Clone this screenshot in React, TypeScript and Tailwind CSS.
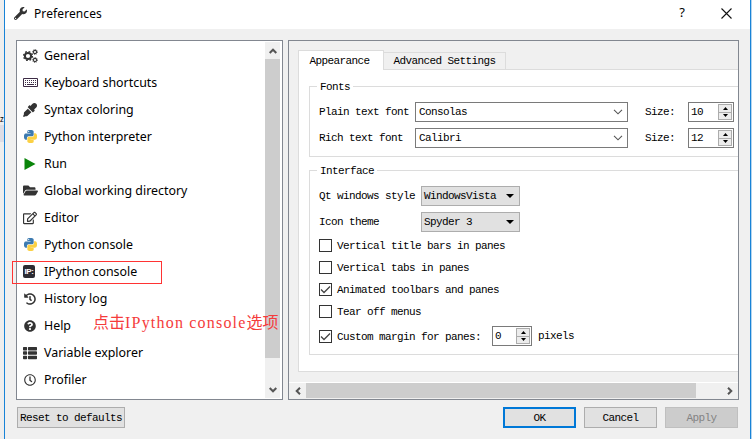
import type { ReactNode } from "react";
import {
  FaWrench, FaEyeDropper, FaFolderOpen, FaRegEdit,
  FaHistory, FaQuestionCircle, FaThList, FaRegClock,
} from "react-icons/fa";

const mono = "font-['Liberation_Mono','Noto_Sans_CJK_SC',monospace] text-[11px] tracking-[-0.6px] whitespace-pre";

function PythonIcon() {
  return (
    <svg viewBox="0 0 24 24" className="size-[13px]">
      <path fill="#3c7ab0" fillRule="evenodd" d="M14.25.18l.9.2.73.26.59.3.45.32.34.34.25.34.16.33.1.3.04.26.02.2-.01.13V8.5l-.05.63-.13.55-.21.46-.26.38-.3.31-.33.25-.35.19-.35.14-.33.1-.3.07-.26.04-.21.02H8.77l-.69.05-.59.14-.5.22-.41.27-.33.32-.27.35-.2.36-.15.37-.1.35-.07.32-.04.27-.02.21v3.06H3.17l-.21-.03-.28-.07-.32-.12-.35-.18-.36-.26-.36-.36-.35-.46-.32-.59-.28-.73-.21-.88-.14-1.05-.05-1.23.06-1.22.16-1.04.24-.87.32-.71.36-.57.4-.44.42-.33.42-.24.4-.16.36-.1.32-.05.24-.01h.16l.06.01h8.16v-.83H6.18l-.01-2.75-.02-.37.05-.34.11-.31.17-.28.25-.26.31-.23.38-.2.44-.18.51-.15.58-.12.64-.1.71-.06.77-.04.84-.02 1.27.05zm-6.3 1.98l-.23.33-.08.41.08.41.23.34.33.22.41.09.41-.09.33-.22.23-.34.08-.41-.08-.41-.23-.33-.33-.22-.41-.09-.41.09z" />
      <path fill="#fbd043" d="M21.04 6.11l.28.06.32.12.35.18.36.27.36.35.35.47.32.59.28.73.21.88.14 1.04.05 1.23-.06 1.23-.16 1.04-.24.86-.32.71-.36.57-.4.45-.42.33-.42.24-.4.16-.36.09-.32.05-.24.02-.16-.01h-8.22v.82h5.84l.01 2.76.02.36-.05.34-.11.31-.17.29-.25.25-.31.24-.38.2-.44.17-.51.15-.58.13-.64.09-.71.07-.77.04-.84.01-1.27-.04-1.07-.14-.9-.2-.73-.25-.59-.3-.45-.33-.34-.34-.25-.34-.16-.33-.1-.3-.04-.25-.02-.2.01-.13v-5.34l.05-.64.13-.54.21-.46.26-.38.3-.32.33-.24.35-.2.35-.14.33-.1.3-.06.26-.04.21-.02.13-.01h5.84l.69-.05.59-.14.5-.21.41-.28.33-.32.27-.35.2-.36.15-.36.1-.35.07-.32.04-.28.02-.21V6.07h2.09z" />
    </svg>
  );
}

function GearsIcon() {
  return (
    <svg viewBox="0 0 15 14" className="h-[14px] w-[15px]" fill="none" stroke="#333">
      <circle cx="5" cy="7" r="3.1" strokeWidth="2" />
      <circle cx="5" cy="7" r="4.5" strokeWidth="1.2" strokeDasharray="1.77 1.77" />
      <circle cx="12" cy="3" r="1.6" strokeWidth="1.1" />
      <circle cx="12" cy="3" r="2.5" strokeWidth=".8" strokeDasharray="1 .96" />
      <circle cx="12" cy="11" r="1.6" strokeWidth="1.1" />
      <circle cx="12" cy="11" r="2.5" strokeWidth=".8" strokeDasharray="1 .96" />
    </svg>
  );
}

function KeyboardIcon() {
  return (
    <svg viewBox="0 0 15 9" className="h-[9px] w-[15px]" fill="none" stroke="#3d2b45">
      <path d="M.5.5h14v8H.5z" />
      <path d="M2 2.5h11M2 4.5h11" strokeDasharray="1 1" />
      <path d="M2 6.5h1M4 6.5h7M12 6.5h1" />
    </svg>
  );
}

const items: { label: string; icon: ReactNode }[] = [
  { label: "General", icon: <GearsIcon /> },
  { label: "Keyboard shortcuts", icon: <KeyboardIcon /> },
  { label: "Syntax coloring", icon: <FaEyeDropper className="size-[14px]" /> },
  { label: "Python interpreter", icon: <PythonIcon /> },
  { label: "Run", icon: <svg viewBox="0 0 12 12" className="size-[12px]"><path fill="#0a850a" d="M.5 0L11.5 6 .5 12z" /></svg> },
  { label: "Global working directory", icon: <FaFolderOpen className="size-[15px]" /> },
  { label: "Editor", icon: <FaRegEdit className="size-[14px]" /> },
  { label: "Python console", icon: <PythonIcon /> },
  {
    label: "IPython console",
    icon: (
      <span className="mr-[2px] flex h-[13px] w-[12px] items-center justify-center rounded-[2px] bg-[#2c2c33] font-['Liberation_Sans',sans-serif] text-[8px] leading-none font-bold tracking-[-0.4px] text-white">IP:</span>
    ),
  },
  { label: "History log", icon: <FaHistory className="size-[12px]" /> },
  { label: "Help", icon: <FaQuestionCircle className="size-[12px]" /> },
  { label: "Variable explorer", icon: <FaThList className="size-[14px]" /> },
  { label: "Profiler", icon: <FaRegClock className="size-[12px]" /> },
];

const turns = { up: "rotate-180", down: "", left: "rotate-90", right: "-rotate-90" };

function ScrollArrow({ dir }: { dir: keyof typeof turns }) {
  return (
    <svg viewBox="0 0 8 6" className={`h-[6px] w-[8px] ${turns[dir]}`}>
      <path d="M.7 1L4 4.3 7.3 1" fill="none" stroke="#555" strokeWidth="2" />
    </svg>
  );
}

function Combo({ value }: { value: string }) {
  return (
    <div className="flex h-[20px] w-[213px] items-center justify-between border border-[#7a7a7a] bg-white pr-[4px] pl-[3px]">
      <span>{value}</span>
      <svg viewBox="0 0 10 6" className="h-[6px] w-[10px]"><path d="M1 .8l4 4 4-4" fill="none" stroke="#555" strokeWidth="1.1" /></svg>
    </div>
  );
}

function Spin({ value, width }: { value: string; width: string }) {
  return (
    <div className={`flex h-[20px] items-center justify-between border border-[#7a7a7a] bg-white pr-[1px] pl-[2px] ${width}`}>
      <span>{value}</span>
      <span className="flex h-[16px] w-[14px] flex-col">
        <span className="flex flex-1 items-center justify-center border border-[#acacac] bg-[#ececec]">
          <svg viewBox="0 0 5 3" className="h-[3px] w-[5px]"><path d="M0 3L2.5 0 5 3z" /></svg>
        </span>
        <span className="flex flex-1 items-center justify-center border border-t-0 border-[#acacac] bg-[#ececec]">
          <svg viewBox="0 0 5 3" className="h-[3px] w-[5px]"><path d="M0 0h5L2.5 3z" /></svg>
        </span>
      </span>
    </div>
  );
}

function DropButton({ value }: { value: string }) {
  return (
    <div className="flex h-[20px] w-[99px] items-center justify-between border border-[#adadad] bg-[#e1e1e1] pr-[5px] pl-[2px]">
      <span>{value}</span>
      <svg viewBox="0 0 8 4" className="h-[4px] w-[8px]"><path d="M0 0h8L4 4z" /></svg>
    </div>
  );
}

function Check({ label, checked }: { label: string; checked?: boolean }) {
  return (
    <div className="flex h-[13px] items-center gap-[5px]">
      <span className="flex size-[13px] items-center justify-center border border-[#333] bg-white">
        {checked && <svg viewBox="0 0 11 11" className="size-[11px]"><path d="M1 5.5l3 3L10 2.5" fill="none" stroke="#444" strokeWidth="1.3" /></svg>}
      </span>
      <span className="mt-[2px]">{label}</span>
    </div>
  );
}

function GroupTitle({ children }: { children: string }) {
  return (
    <div className="-mt-[1px] flex h-[1px] items-center">
      <span className="ml-[7px] bg-white px-[3px] leading-[14px]">{children}</span>
    </div>
  );
}

export default function App() {
  return (
    <div className="relative flex h-[439px] w-[752px] overflow-hidden bg-[#f0f0f0] text-black">
      <div className="flex w-[4px] flex-col bg-[#eeeeee]">
        <div className="mt-[111px] h-[14px] font-['Noto_Sans',sans-serif] text-[8px] leading-[16px]">z</div>
        <div className="h-[17px] bg-[#dddde6]" />
      </div>
      <div className="flex w-[747px] flex-col border-r border-l border-[#1883d7] bg-[#f0f0f0]">
        <header className="flex h-[29px] items-center bg-white pr-[18px] pl-[9px]">
          <FaWrench className="mt-[-2px] size-[13px] text-[#333]" />
          <h1 className="mt-[-2px] ml-[7px] font-['Noto_Sans',sans-serif] text-[12px] tracking-[0.1px]">Preferences</h1>
          <span className="mt-[-3px] mr-[36px] ml-auto font-['Noto_Sans',sans-serif] text-[13px]">?</span>
          <svg viewBox="0 0 11 11" className="mt-[-3px] size-[11px]"><path d="M.5.5l10 10M10.5.5l-10 10" stroke="#111" strokeWidth="1.1" /></svg>
        </header>
        <main className="flex h-[371px] gap-[5px] pt-[11px] pl-[11px]">
          <nav className="flex h-[360px] w-[267px] justify-between border border-[#828790] bg-white py-[1px] pr-[2px]">
            <ul className="w-[240px] font-['Noto_Sans',sans-serif] text-[12.4px]">
              {items.map((item) => (
                <li key={item.label} className="flex h-[27px] items-center gap-[6px] pl-[5px]">
                  <span className="flex w-[16px] justify-center text-[#333]">{item.icon}</span>
                  <span className="mt-[2px] whitespace-nowrap">{item.label}</span>
                </li>
              ))}
            </ul>
            <div className="flex w-[15px] flex-col items-center bg-[#f0f0f0]">
              <div className="flex h-[17px] items-center"><ScrollArrow dir="up" /></div>
              <div className="h-[299px] w-full bg-[#cdcdcd]" />
              <div className="mt-auto flex h-[16px] items-center"><ScrollArrow dir="down" /></div>
            </div>
          </nav>
          <section className={`flex h-[360px] w-[451px] flex-col border border-[#828790] bg-[#f0f0f0] ${mono}`}>
            <div className="flex h-[341px] flex-col overflow-hidden pt-[9px] pl-[9px]">
              <div className="z-10 -mb-[1px] flex h-[20px] items-end">
                <div className="flex h-[20px] w-[86px] items-center justify-center border border-b-0 border-[#dcdcdc] bg-white pt-[2px] pr-[3px]">Appearance</div>
                <div className="mb-[1px] -ml-px flex h-[17px] w-[123px] items-center justify-center border border-b-0 border-[#dcdcdc] pt-[1px]">Advanced Settings</div>
              </div>
              <div className="h-[303px] border border-r-0 border-[#dcdcdc] bg-white pt-[16px] pl-[10px]">
                <div className="h-[71px] border border-r-0 border-[#dcdcdc]">
                  <GroupTitle>Fonts</GroupTitle>
                  <div className="mt-[15px] flex flex-col gap-[6px] pl-[9px]">
                    {[["Plain text font", "Consolas", "10"], ["Rich text font", "Calibri", "12"]].map(([label, family, size]) => (
                      <div key={label} className="flex items-center">
                        <span className="w-[96px]">{label}</span>
                        <Combo value={family} />
                        <span className="ml-[17px] w-[43px]">Size:</span>
                        <Spin value={size} width="w-[46px]" />
                      </div>
                    ))}
                  </div>
                </div>
                <div className="mt-[13px] h-[185px] border border-r-0 border-[#dcdcdc]">
                  <GroupTitle>Interface</GroupTitle>
                  <div className="mt-[15px] flex flex-col pl-[9px]">
                    <div className="flex items-center"><span className="w-[102px]">Qt windows style</span><DropButton value="WindowsVista" /></div>
                    <div className="mt-[6px] flex items-center"><span className="w-[102px]">Icon theme</span><DropButton value="Spyder 3" /></div>
                    <div className="mt-[7px] flex flex-col gap-[9px]">
                      <Check label="Vertical title bars in panes" />
                      <Check label="Vertical tabs in panes" />
                      <Check label="Animated toolbars and panes" checked />
                      <Check label="Tear off menus" />
                    </div>
                    <div className="mt-[8px] flex items-center">
                      <div className="w-[173px]"><Check label="Custom margin for panes:" checked /></div>
                      <Spin value="0" width="w-[40px]" />
                      <span className="ml-[6px]">pixels</span>
                    </div>
                  </div>
                </div>
              </div>
            </div>
            <div className="flex h-[16px] items-center border-t border-white">
              <div className="flex w-[17px] justify-center"><ScrollArrow dir="left" /></div>
              <div className="h-full w-[390px] bg-[#cdcdcd]" />
              <div className="mr-[4px] ml-auto"><ScrollArrow dir="right" /></div>
            </div>
          </section>
        </main>
        <footer className={`flex items-center pt-[7px] pr-[12px] pl-[12px] ${mono}`}>
          <button className="h-[21px] w-[108px] border border-[#adadad] bg-[#e1e1e1] pt-[1px]">Reset to defaults</button>
          <button className="ml-auto h-[21px] w-[73px] border-2 border-[#0078d7] bg-[#e1e1e1] pt-[1px]">OK</button>
          <button className="ml-[8px] h-[21px] w-[73px] border border-[#adadad] bg-[#e1e1e1] pt-[1px]">Cancel</button>
          <button className="ml-[8px] h-[21px] w-[73px] border border-[#bfbfbf] bg-[#cccccc] pt-[1px] text-[#838383]">Apply</button>
        </footer>
      </div>
      <div className="w-[1px] bg-[#b5d5ee]" />
      <div className="absolute top-[261px] left-[12px] z-20 h-[23px] w-[150px] border border-solid border-[#ff3333]" />
      <div className="absolute top-[312px] left-[93px] text-[16px] leading-[22px] whitespace-nowrap text-[#f53b3b] font-['Liberation_Serif','Noto_Sans_CJK_SC',serif]">
        点击<span className="tracking-[1.2px]">IPython console</span>选项
      </div>
    </div>
  );
}
